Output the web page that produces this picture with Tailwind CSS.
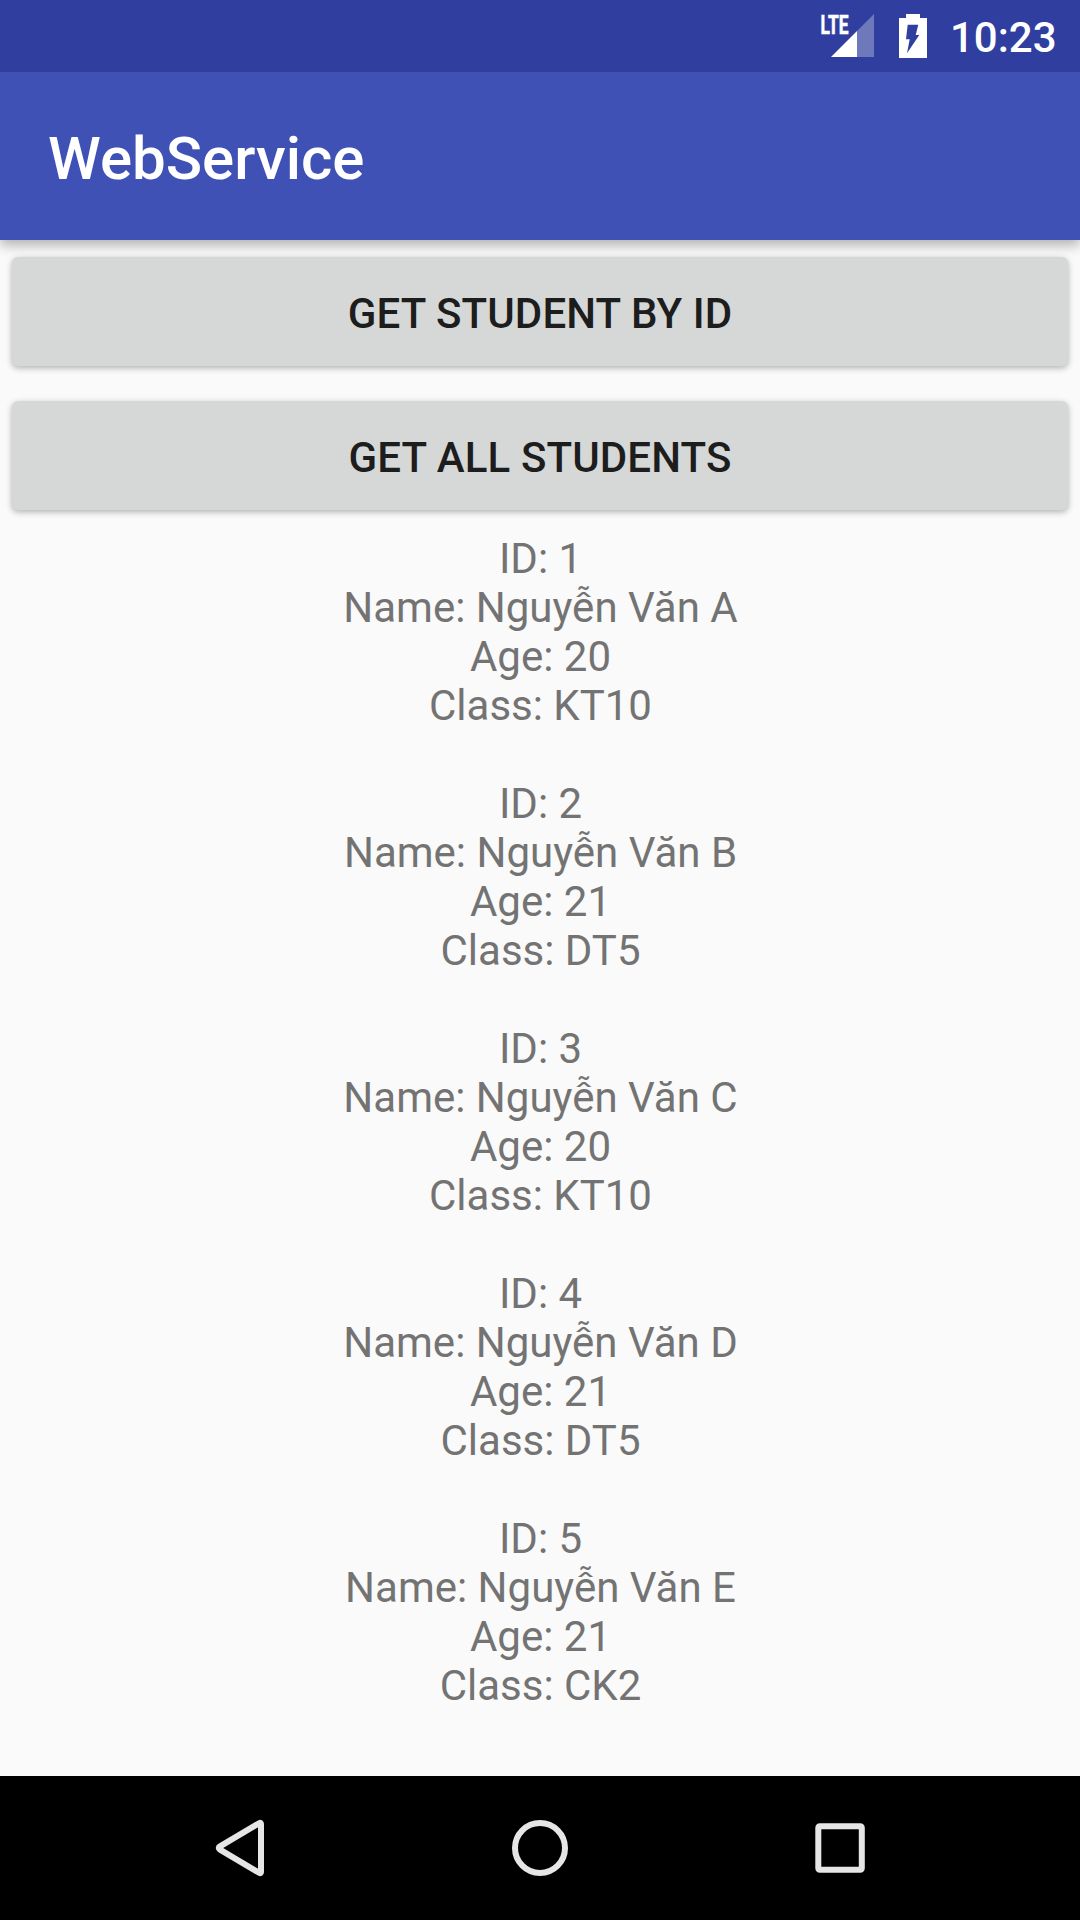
<!DOCTYPE html>
<html lang="vi">
<head>
<meta charset="utf-8">
<title>WebService</title>
<script src="https://cdn.jsdelivr.net/npm/@tailwindcss/browser@4"></script>
</head>
<body class="bg-[#fafafa]">
<div class="flex h-[1920px] w-[1080px] flex-col overflow-hidden bg-[#fafafa] font-[Roboto,sans-serif]">
  <div class="relative z-20 flex h-[72px] shrink-0 items-start justify-end bg-[#303f9f] pr-6 text-white">
    <svg class="h-[72px] w-[130px] shrink-0" viewBox="820 0 130 72" fill="#fff">
      <text x="820.5" y="33.5" font-size="26" font-weight="700" textLength="28" lengthAdjust="spacingAndGlyphs" stroke="#fff" stroke-width=".6">LTE</text>
      <path d="M857 31L874 14V57H857z" fill-opacity=".3"/>
      <path d="M831 57L857 31V57z"/>
      <path fill-rule="evenodd" d="M906 14h14v4h7v40h-28V18h7zM907.7 24.7L906 39.3h3.7L907 53.3L919.3 35h-3.6L918.3 24.7z"/>
    </svg>
    <span class="w-[106px] pt-[13px] text-center text-[42px] leading-[49px] font-medium">10:23</span>
  </div>
  <header class="relative z-10 flex h-[168px] shrink-0 items-center bg-[#3f51b5] px-12 pt-[5px] shadow-[0_5px_12px_rgba(0,0,0,0.3)]">
    <h1 class="text-[60px] leading-[70px] font-medium text-white">WebService</h1>
  </header>
  <main class="flex flex-1 flex-col px-3 pt-[17px]">
    <div class="flex flex-col gap-[35px]">
      <button class="h-[109px] rounded-[6px] bg-[#d6d8d7] pt-[3px] text-[42px] leading-[49px] font-medium tracking-[0.12px] text-[#1d1d1d] shadow-[0_2px_6px_rgba(0,0,0,0.3)]">GET STUDENT BY ID</button>
      <button class="h-[109px] rounded-[6px] bg-[#d6d8d7] pt-[3px] text-[42px] leading-[49px] font-medium tracking-[0.12px] text-[#1d1d1d] shadow-[0_2px_6px_rgba(0,0,0,0.3)]">GET ALL STUDENTS</button>
    </div>
    <div class="flex flex-col gap-[49px] pt-6 pl-px text-center text-[42px] leading-[49px] text-[#737373]">
      <p>ID: 1<br>Name: Nguyễn Văn A<br>Age: 20<br>Class: KT10</p>
      <p>ID: 2<br>Name: Nguyễn Văn B<br>Age: 21<br>Class: DT5</p>
      <p>ID: 3<br>Name: Nguyễn Văn C<br>Age: 20<br>Class: KT10</p>
      <p>ID: 4<br>Name: Nguyễn Văn D<br>Age: 21<br>Class: DT5</p>
      <p>ID: 5<br>Name: Nguyễn Văn E<br>Age: 21<br>Class: CK2</p>
    </div>
  </main>
  <nav class="h-36 shrink-0 bg-black">
    <svg class="h-36 w-[1080px]" viewBox="0 1776 1080 144" fill="none" stroke="#e6e6e6" stroke-width="6" stroke-linejoin="round">
      <path d="M220 1846.4Q217.500 1848 220 1849.600L259.500 1873Q261 1873.500 261 1872V1824Q261 1822.500 259.500 1823z"/>
      <circle cx="540" cy="1848" r="25"/>
      <rect x="818.300" y="1826.300" width="43.500" height="43.500" rx="1.500"/>
    </svg>
  </nav>
</div>
</body>
</html>
